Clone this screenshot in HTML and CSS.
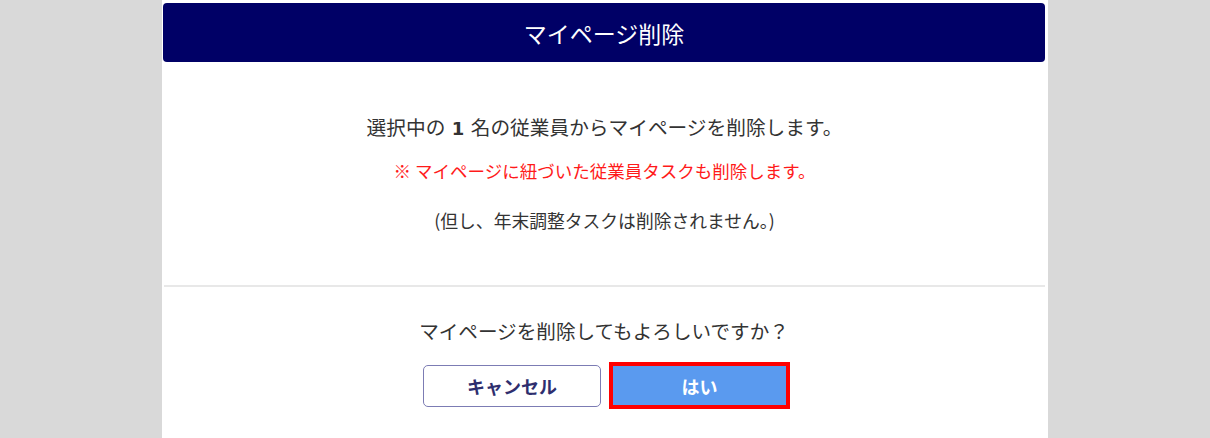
FILE: index.html
```html
<!DOCTYPE html>
<html>
<head>
	<meta charset='utf-8'>
	<title>マイページ削除</title>
	<link rel="stylesheet" href="styles.css">
</head>
<body>

	<div class="modal">
		<div class="modal-header">
			<h2 class="modal-title">マイページ削除</h2>
		</div>

		<div class="modal-body">
			<p class="msg">選択中の <b class="count">1</b> 名の従業員からマイページを削除します。</p>
			<p class="warn">※ マイページに紐づいた従業員タスクも削除します。</p>
			<p class="note">(但し、年末調整タスクは削除されません。)</p>
		</div>

		<div class="modal-footer">
			<p class="confirm">マイページを削除してもよろしいですか？</p>
			<div class="buttons">
				<button type="button" class="btn btn-cancel">キャンセル</button>
				<button type="button" class="btn btn-yes">はい</button>
			</div>
		</div>
	</div>

</body>
</html>
```

FILE: styles.css
```css
body{
	margin: 0;
	background-color: #d9d9d9;
	font-family: "Noto Sans CJK JP", "Noto Sans", sans-serif;
	color: #333;
}
.modal{
	width: 886px;
	min-height: 100vh;
	margin: 0 auto;
	background-color: #fff;
	padding: 3px 3px 0 1px;
	box-sizing: border-box;
}
.modal-header{
	height: 59px;
	background-color: #000066;
	border-radius: 4px;
	display: flex;
	align-items: center;
	justify-content: center;
}
.modal-title{
	margin: 0;
	color: #fff;
	font-size: 23px;
	font-weight: normal;
	line-height: 30px;
}
.modal-body{
	text-align: center;
	padding: 51px 0 53px;
	margin-left: 1px;
	border-bottom: 2px solid #e8e8e8;
}
.modal-body p{
	margin: 0;
}
.msg{
	font-size: 19.7px;
	line-height: 28px;
}
.count{
	font-family: "DejaVu Sans", sans-serif;
	font-size: 18px;
	margin: 0 2px;
}
.warn{
	color: #ff1a1a;
	font-size: 17.5px;
	line-height: 24px;
	margin-top: 16px !important;
}
.note{
	font-size: 17.8px;
	line-height: 24px;
	margin-top: 25px !important;
}
.modal-footer{
	text-align: center;
	padding-top: 30px;
}
.confirm{
	margin: 0;
	font-size: 19.6px;
	line-height: 28px;
}
.buttons{
	display: flex;
	justify-content: center;
	align-items: center;
	gap: 8px;
	margin-top: 17px;
	padding-left: 5px;
}
.btn{
	font-family: "Noto Sans CJK JP", sans-serif;
	font-size: 18px;
	font-weight: bold;
	box-sizing: border-box;
	cursor: pointer;
}
.btn-cancel{
	width: 178px;
	height: 42px;
	background-color: #fff;
	color: #2e2e6e;
	border: 1px solid #7c7cb4;
	border-radius: 5px;
}
.btn-yes{
	width: 181px;
	height: 47px;
	background-color: #5a9aef;
	color: #fff;
	border: 4px solid #ff0000;
	border-radius: 0;
}
```
